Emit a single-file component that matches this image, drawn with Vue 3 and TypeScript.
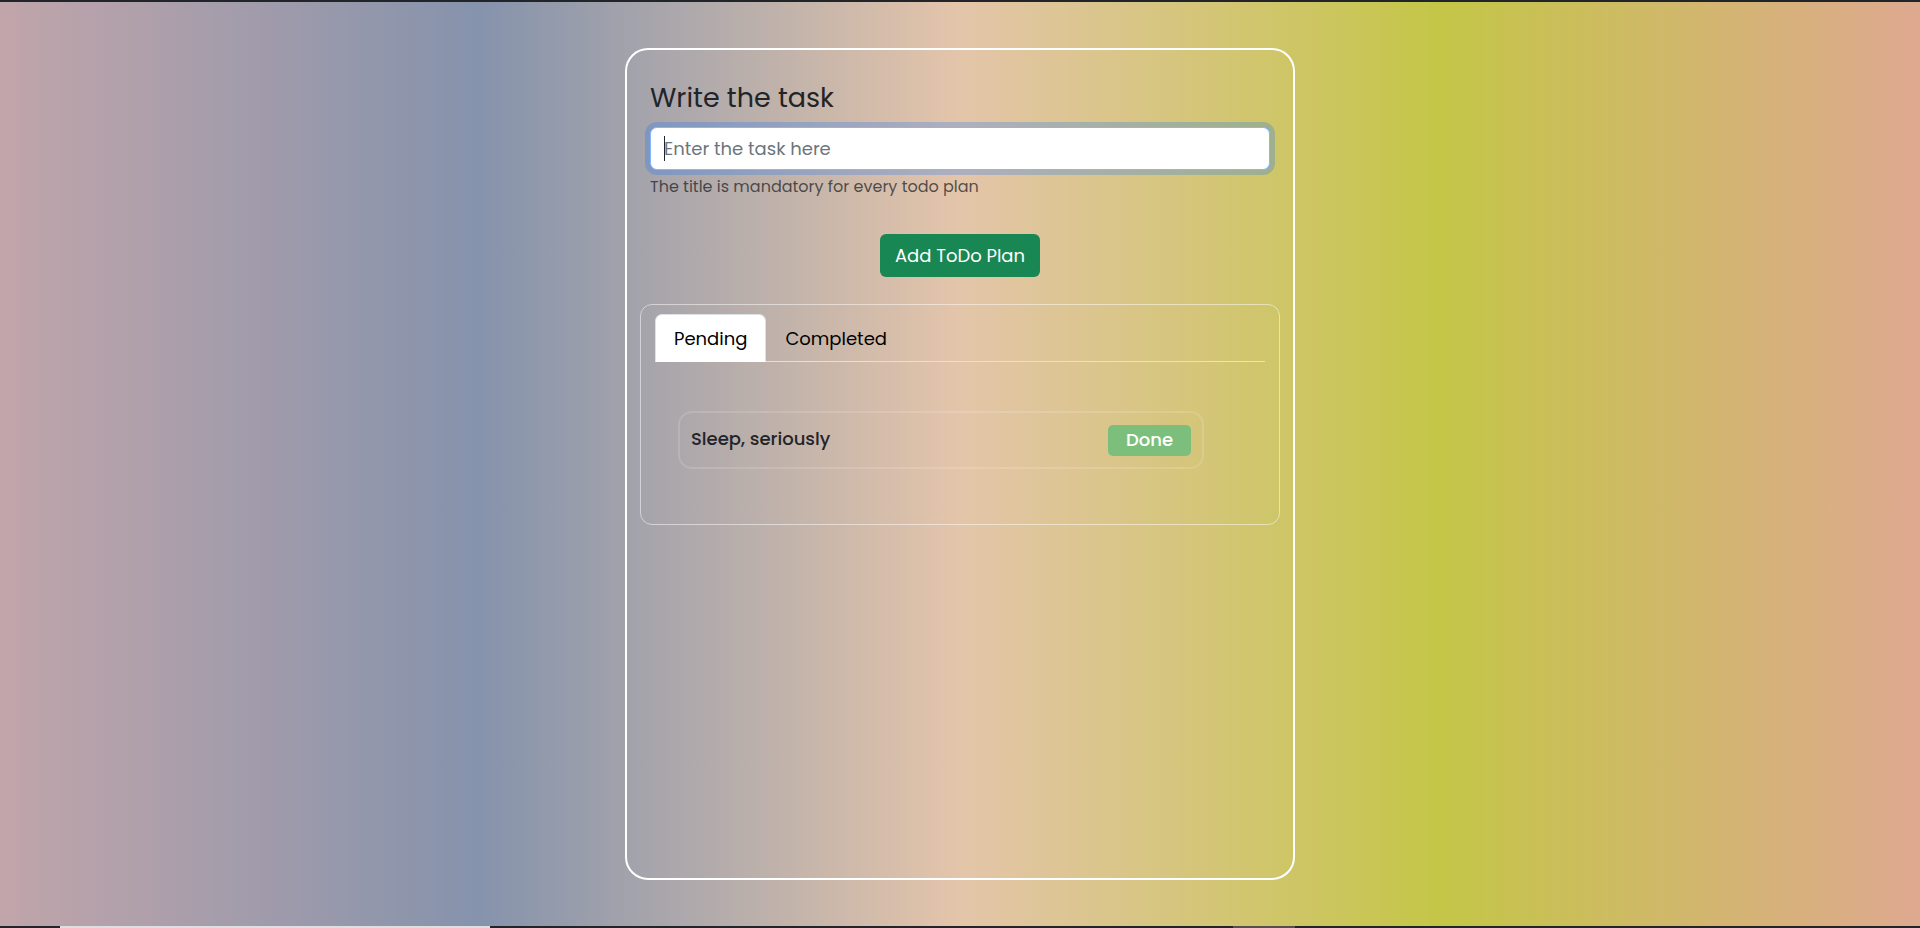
<script setup lang="ts">
import { computed, onMounted, ref } from 'vue'

interface Todo {
  id: number
  title: string
  done: boolean
}

const todos = ref<Todo[]>([{ id: 1, title: 'Sleep, seriously', done: false }])
const title = ref('')
const tab = ref<'pending' | 'completed'>('pending')
const titleInput = ref<HTMLInputElement | null>(null)

const visible = computed(() => todos.value.filter((t) => t.done === (tab.value === 'completed')))

function addTodo(): void {
  const text = title.value.trim()
  if (!text) return
  todos.value.push({ id: Date.now(), title: text, done: false })
  title.value = ''
}

onMounted(() => titleInput.value?.focus())
</script>

<template>
  <div class="page">
    <main class="card">
      <form class="form" @submit.prevent="addTodo">
        <label class="heading" for="task-title">Write the task</label>
        <div class="field-wrap">
          <input
            id="task-title"
            ref="titleInput"
            v-model="title"
            class="field"
            type="text"
            placeholder="Enter the task here"
            aria-describedby="task-help"
            autocomplete="off"
          />
          <span v-if="!title" class="caret" aria-hidden="true"></span>
        </div>
        <small id="task-help" class="help">The title is mandatory for every todo plan</small>
        <button class="add" type="submit">Add ToDo Plan</button>
      </form>

      <section class="panel">
        <div class="tabs" role="tablist">
          <button
            class="tab"
            :class="{ active: tab === 'pending' }"
            type="button"
            role="tab"
            :aria-selected="tab === 'pending'"
            @click="tab = 'pending'"
          >
            Pending
          </button>
          <button
            class="tab"
            :class="{ active: tab === 'completed' }"
            type="button"
            role="tab"
            :aria-selected="tab === 'completed'"
            @click="tab = 'completed'"
          >
            Completed
          </button>
        </div>
        <ul class="list">
          <li v-for="todo in visible" :key="todo.id" class="item">
            <span class="name">{{ todo.title }}</span>
            <button v-if="!todo.done" class="done" type="button" @click="todo.done = true">Done</button>
          </li>
        </ul>
      </section>
    </main>
    <div class="footer-edge">
      <span class="edge-light"></span>
      <span class="edge-grey"></span>
    </div>
  </div>
</template>

<style>
body {
  margin: 0;
}
</style>

<style scoped>
.page {
  box-sizing: border-box;
  min-height: 100vh;
  display: flex;
  flex-direction: column;
  border-top: 2px solid #212529;
  background: linear-gradient(90deg, #c1a5aa 0%, #8593ac 25%, #e4c5aa 50%, #c4c647 75%, #dea990 100%);
  color: #212529;
  font-family: Poppins, Inter, "Noto Sans", sans-serif;
  font-size: 18px;
  line-height: 27px;
}

.card {
  box-sizing: border-box;
  width: 100%;
  max-width: 670px;
  flex: 1;
  margin: 46px auto;
  padding: 29px 13px;
  border: 2px solid #fff;
  border-radius: 23px;
}

.form {
  display: flex;
  flex-direction: column;
  padding: 0 10px;
}

.heading {
  margin-bottom: 10px;
  font-size: 27px;
  line-height: 38px;
}

.field-wrap {
  position: relative;
}

.field {
  display: block;
  box-sizing: border-box;
  width: 100%;
  height: 43px;
  padding: 6px 13px;
  border: 1px solid #86b7fe;
  border-radius: 7px;
  outline: none;
  background: #fff;
  color: #212529;
  font: inherit;
}

.field:focus {
  box-shadow: 0 0 0 5px rgba(13, 110, 253, 0.25);
}

.field:placeholder-shown {
  caret-color: transparent;
}

.field::placeholder {
  color: #6c757d;
  opacity: 1;
}

.caret {
  position: absolute;
  top: 9px;
  left: 14px;
  width: 1px;
  height: 25px;
  background: #212529;
  visibility: hidden;
  pointer-events: none;
}

.field:focus + .caret {
  visibility: visible;
}

.help {
  margin-top: 5px;
  color: rgba(33, 37, 41, 0.75);
  font-size: 16px;
  line-height: 24px;
}

.add {
  align-self: center;
  height: 43px;
  margin-top: 35px;
  padding: 0 15px;
  border: 0;
  border-radius: 6px;
  background: #198754;
  color: #fff;
  font: inherit;
}

.panel {
  box-sizing: border-box;
  min-height: 221px;
  margin-top: 27px;
  padding: 9px 14px 55px;
  border: 1px solid rgba(255, 255, 255, 0.5);
  border-radius: 12px;
}

.tabs {
  display: flex;
  border-bottom: 1px solid #dee2e6;
}

.tab {
  height: 48px;
  margin-bottom: -1px;
  padding: 0 18px;
  border: 1px solid transparent;
  border-radius: 7px 7px 0 0;
  background: none;
  color: #000;
  font: inherit;
}

.tab.active {
  border-color: #dee2e6 #dee2e6 #fff;
  background: #fff;
}

.list {
  display: grid;
  gap: 18px;
  margin: 49px 61px 0 23px;
  padding: 0;
  list-style: none;
}

.item {
  display: flex;
  align-items: flex-start;
  justify-content: space-between;
  padding: 12px 11px 11px;
  border: 2px solid rgba(255, 255, 255, 0.14);
  border-radius: 14px;
}

.name {
  font-weight: 500;
}

.done {
  height: 31px;
  padding: 0 18px 2px;
  border: 0;
  border-radius: 5px;
  background: #7cbf7c;
  color: #fff;
  font: inherit;
  font-weight: 500;
}

.footer-edge {
  display: grid;
  grid-template-columns: 60fr 430fr 743fr 62fr 625fr;
  height: 2px;
  background: #212529;
}

.edge-light {
  grid-column: 2;
  background: #dedfe2;
}

.edge-grey {
  grid-column: 4;
  background: #55504f;
}
</style>
